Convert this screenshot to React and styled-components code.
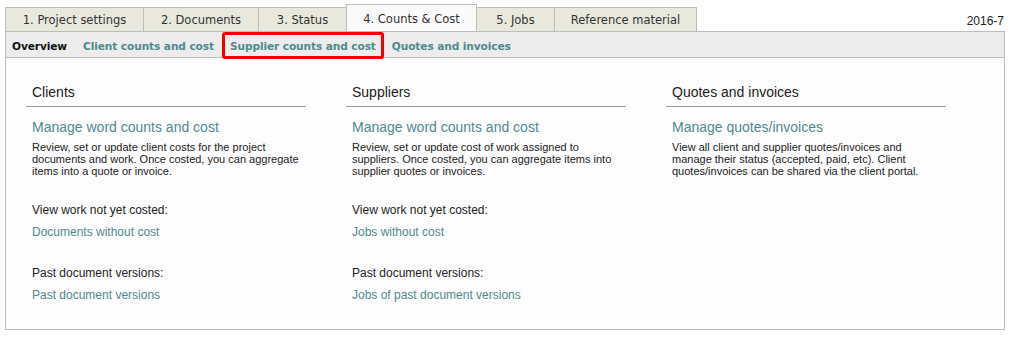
import React from "react";
import styled, { createGlobalStyle } from "styled-components";

const Global = createGlobalStyle`
  html, body { margin: 0; padding: 0; background: #fff; }
  body { font-family: "Liberation Sans", Arial, sans-serif; }
`;

const Page = styled.div`
  padding: 0 7px 0 5px;
`;

const TopRow = styled.div`
  display: flex;
  align-items: flex-end;
  justify-content: space-between;
  height: 31px;
`;

const Tabs = styled.div`
  display: flex;
  align-items: flex-end;
`;

const Tab = styled.div`
  box-sizing: border-box;
  height: ${(p) => (p.$active ? 27 : 24)}px;
  width: ${(p) => p.$w}px;
  margin-left: -1px;
  &:first-child { margin-left: 0; }
  border: 1px solid #bdbdbd;
  border-bottom: none;
  background: ${(p) => (p.$active ? "#fafafa" : "#e8e8dc")};
  font-family: "DejaVu Sans", Verdana, sans-serif;
  font-size: 11.5px;
  color: #333;
  display: flex;
  align-items: center;
  justify-content: center;
  padding-top: ${(p) => (p.$active ? 1 : 0)}px;
  position: relative;
  z-index: ${(p) => (p.$active ? 1 : 0)};
`;

const DateLabel = styled.div`
  font-size: 12px;
  color: #222;
  align-self: flex-start;
  margin-top: 14px;
  margin-right: 1px;
`;

const SubNav = styled.div`
  display: flex;
  align-items: stretch;
  height: 26px;
  background: #ececec;
  border-left: 1px solid #bdbdbd;
  border-right: 1px solid #bdbdbd;
  border-top: 1px solid #bdbdbd;
  box-sizing: border-box;
  padding-left: 0;
`;

const SubItem = styled.div`
  box-sizing: border-box;
  display: flex;
  align-items: center;
  padding: 0 8px;
  &:first-child { padding-left: 6px; }
  font-family: "DejaVu Sans", Verdana, sans-serif;
  font-weight: bold;
  font-size: 10.6px;
  letter-spacing: -0.1px;
  color: ${(p) => (p.$current ? "#111" : "#4f8a8c")};
  border-radius: 3px;
  box-shadow: ${(p) => (p.$highlight ? "inset 0 0 0 3px #f00000" : "none")};
  height: 27px;
  position: relative;
  z-index: ${(p) => (p.$highlight ? 2 : 0)};
`;

const Panel = styled.div`
  border: 1px solid #bdbdbd;
  background: #fdfdfd;
  height: 273px;
  box-sizing: border-box;
  padding: 26px 20px 0 20px;
  display: grid;
  grid-template-columns: repeat(3, 280px);
  column-gap: 40px;
  align-items: start;
`;

const Column = styled.div`
  display: flex;
  flex-direction: column;
`;

const ColTitle = styled.h2`
  margin: 0;
  font-weight: normal;
  font-size: 14px;
  color: #222;
  padding: 0 6px 5px 6px;
  border-bottom: 1px solid #999;
  line-height: 17px;
`;

const Block = styled.div`
  padding: 0 6px;
`;

const BigLink = styled.a`
  display: block;
  margin-top: 12px;
  font-size: 14px;
  line-height: 17px;
  color: #4f8a8c;
  text-decoration: none;
`;

const Desc = styled.p`
  margin: 5px 0 0 0;
  font-size: 11px;
  line-height: 12px;
  color: #222;
`;

const Label = styled.div`
  margin-top: ${(p) => p.$mt}px;
  font-size: 12px;
  line-height: 14px;
  color: #222;
`;

const SmallLink = styled.a`
  display: block;
  margin-top: 8px;
  font-size: 12px;
  line-height: 14px;
  color: #4f8a8c;
  text-decoration: none;
`;

const tabs = [
  { label: "1. Project settings", w: 139 },
  { label: "2. Documents", w: 116 },
  { label: "3. Status", w: 89 },
  { label: "4. Counts & Cost", w: 131, active: true },
  { label: "5. Jobs", w: 79 },
  { label: "Reference material", w: 143 },
];

const columns = [
  {
    title: "Clients",
    link: "Manage word counts and cost",
    desc: "Review, set or update client costs for the project documents and work. Once costed, you can aggregate items into a quote or invoice.",
    extra: [
      { label: "View work not yet costed:", link: "Documents without cost" },
      { label: "Past document versions:", link: "Past document versions" },
    ],
  },
  {
    title: "Suppliers",
    link: "Manage word counts and cost",
    desc: "Review, set or update cost of work assigned to suppliers. Once costed, you can aggregate items into supplier quotes or invoices.",
    extra: [
      { label: "View work not yet costed:", link: "Jobs without cost" },
      { label: "Past document versions:", link: "Jobs of past document versions" },
    ],
  },
  {
    title: "Quotes and invoices",
    link: "Manage quotes/invoices",
    desc: "View all client and supplier quotes/invoices and manage their status (accepted, paid, etc). Client quotes/invoices can be shared via the client portal.",
    extra: [],
  },
];

export default function App() {
  return (
    <>
      <Global />
      <Page>
        <TopRow>
          <Tabs>
            {tabs.map((t) => (
              <Tab key={t.label} $w={t.w} $active={t.active}>
                {t.label}
              </Tab>
            ))}
          </Tabs>
          <DateLabel>2016-7</DateLabel>
        </TopRow>
        <SubNav>
          <SubItem $current>Overview</SubItem>
          <SubItem>Client counts and cost</SubItem>
          <SubItem $highlight>Supplier counts and cost</SubItem>
          <SubItem>Quotes and invoices</SubItem>
        </SubNav>
        <Panel>
          {columns.map((c) => (
            <Column key={c.title}>
              <ColTitle>{c.title}</ColTitle>
              <Block>
                <BigLink href="#">{c.link}</BigLink>
                <Desc>{c.desc}</Desc>
                {c.extra.map((e, i) => (
                  <React.Fragment key={e.label}>
                    <Label $mt={i === 0 ? 26 : 27}>{e.label}</Label>
                    <SmallLink href="#">{e.link}</SmallLink>
                  </React.Fragment>
                ))}
              </Block>
            </Column>
          ))}
        </Panel>
      </Page>
    </>
  );
}
